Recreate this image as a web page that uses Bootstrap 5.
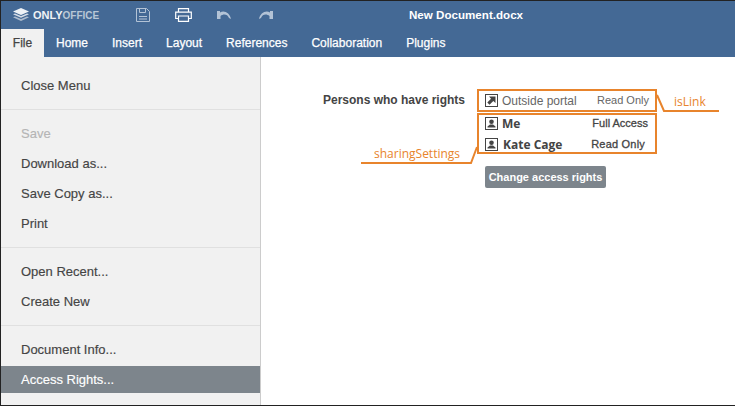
<!DOCTYPE html>
<html lang="en"><head><meta charset="utf-8"><title>New Document.docx</title>
<link rel="stylesheet" href="https://cdn.jsdelivr.net/npm/bootstrap@5.3.0/dist/css/bootstrap.min.css">
<style>
html,body{margin:0;height:406px;overflow:hidden;background:#fff}
body{font-family:"Liberation Sans",Arial,sans-serif;color:#444}
.frame{width:735px;height:406px;border:1px solid #222;border-right:0;position:relative;overflow:hidden}
.topbar{height:56px;background:#446995;color:#fff}
.titlerow{height:28px;position:relative}
.logo-box{width:106px;flex:none;padding-left:12px;gap:4px}
.logo-word{font-size:11px;font-weight:700;color:#f0f3f6;white-space:nowrap}
.logo-word span{font-size:10px;font-weight:700;color:#b9c7d6}
.tool-icons{margin-left:15px}
.tool{width:41px;display:flex;justify-content:center}
.doc-name{position:absolute;left:408px;top:7px;font-size:11.6px;font-weight:700;line-height:14px}
.tabrow{height:28px;font-size:12px;padding-left:43px;-webkit-text-stroke:.25px currentColor}
.tabitem{line-height:28px;color:#fff;white-space:nowrap;margin-left:24px}
.tabitem.on{position:absolute;left:0;width:43px;margin:0;text-align:center;background:#f1f1f1;color:#444}
.tabitem.lead-tab{margin-left:12px}
.bodyrow{height:348px}
.sidemenu{width:260px;flex:none;background:#f1f1f1;border-right:1px solid #ccc;padding-top:14px;height:348px;overflow:hidden;font-size:13px;-webkit-text-stroke:.15px currentColor}
.mitem{height:30px;line-height:29px;padding-left:20px;color:#444;white-space:nowrap}
.mitem.off{color:#b5b5b5}
.mitem.sel{background:#7d858c;color:#fff;height:27px;line-height:27px;margin-top:1px;margin-bottom:2px}
.msep{height:1px;background:#e0e0e0;margin:8px 0 9px}
.rightpane{flex:1;padding:32px 0 0 62px;position:relative}
.rights-label{width:155px;font-size:12px;font-weight:700;color:#444;line-height:22px;white-space:nowrap}
.rights-list{width:172px;font-size:12px}
.rrow{height:21px;display:flex;align-items:center;padding-left:7px;white-space:nowrap}
.rrow.first{height:23px;margin-bottom:1px;color:#666}
.pname{margin-left:4px;flex:1}
.pname.strong{font-weight:700;color:#444;font-family:"Open Sans",sans-serif}
.pname.me{margin-left:4px}
.pname.kate{margin-left:5px}
.pacc{font-size:11px;padding-right:1px}
.pacc.m{color:#444;padding-right:2px;-webkit-text-stroke:.3px #444}
.pacc.rd{padding-right:5px;-webkit-text-stroke:.3px #444;letter-spacing:.2px}
.change-btn{display:block;margin:11px 0 0 7px;width:121px;height:22px;padding:0;border:0;border-radius:2px;background:#7d858c;color:#fff;font-size:11px;font-weight:700;line-height:22px}
.anno-svg{position:absolute;left:-1px;top:-1px;pointer-events:none}
.anno-text{position:absolute;color:#e8842c;font-family:"Open Sans",sans-serif;font-size:12px;line-height:16px}
</style></head><body>
<div class="frame">
 <div class="topbar">
  <div class="titlerow d-flex align-items-center">
   <div class="logo-box d-flex align-items-center">
    <svg width="16" height="14" viewBox="1 0 16 14"><path d="M9 0l8 3.500-8 3.500-8-3.500z" fill="#eef2f6"/><path d="M1 6.200l2-.8 6 2.600 6-2.600 2 .8L9 9.700z" fill="#d5dde7"/><path d="M1 9.200l2-.8 6 2.600 6-2.600 2 .8L9 13z" fill="#aebccd"/></svg>
    <div class="logo-word">ONLY<span>OFFICE</span></div>
   </div>
   <div class="tool-icons d-flex align-items-center">
    <div class="tool"><svg width="14" height="14" viewBox="0 0 14 14" fill="none" stroke="#b3c3d6"><path d="M.5.5h10l3 3v10H.5z"/><path d="M3.500.5v4h6v-4"/><path d="M3 8.500h8M3 11h8"/></svg></div>
    <div class="tool"><svg width="17" height="14" viewBox="0 0 17 14" fill="none" stroke="#fff" stroke-width="1.2"><path d="M3.500 4V.7h10V4"/><path d="M3.500 10.500H.7V4.200h15.600v6.300h-2.800"/><path d="M3.500 8h10v5.400h-10z"/></svg></div>
    <div class="tool"><svg width="15" height="10" viewBox="0 0 15 10"><path d="M0 1v8h3.500V6c3-2.500 7-2 8.500 2l2 1C13 3 7-.5 3 2.500V1z" fill="#b3c3d6"/></svg></div>
    <div class="tool"><svg width="15" height="10" viewBox="0 0 15 10"><path d="M15 1v8h-3.500V6C8.500 3.500 4.500 4 3 8L1 9C2 3 8-.5 12 2.500V1z" fill="#b3c3d6"/></svg></div>
   </div>
   <div class="doc-name">New Document.docx</div>
  </div>
  <div class="tabrow d-flex position-relative">
   <div class="tabitem on">File</div>
   <div class="tabitem lead-tab">Home</div>
   <div class="tabitem">Insert</div>
   <div class="tabitem">Layout</div>
   <div class="tabitem">References</div>
   <div class="tabitem">Collaboration</div>
   <div class="tabitem">Plugins</div>
  </div>
 </div>
 <div class="bodyrow d-flex">
  <div class="sidemenu">
   <div class="mitem">Close Menu</div>
   <div class="msep"></div>
   <div class="mitem off">Save</div>
   <div class="mitem">Download as...</div>
   <div class="mitem">Save Copy as...</div>
   <div class="mitem">Print</div>
   <div class="msep"></div>
   <div class="mitem">Open Recent...</div>
   <div class="mitem">Create New</div>
   <div class="msep"></div>
   <div class="mitem">Document Info...</div>
   <div class="mitem sel">Access Rights...</div>
   <div class="mitem off">Version History</div>
  </div>
  <div class="rightpane d-flex">
   <div class="rights-label">Persons who have rights</div>
   <div>
    <div class="rights-list">
     <div class="rrow first">
      <svg width="13" height="13" viewBox="0 0 13 13"><rect x=".5" y=".5" width="12" height="12" fill="none" stroke="#444"/><path d="M4 2.500h6.500V9L8.300 7 4.500 10.800 2.300 8.600 6 4.700z" fill="#444"/></svg>
      <span class="pname">Outside portal</span><span class="pacc">Read Only</span>
     </div>
     <div class="rrow">
      <svg width="13" height="13" viewBox="0 0 13 13"><rect x=".5" y=".5" width="12" height="12" fill="none" stroke="#444"/><circle cx="6.500" cy="4.700" r="2.300" fill="#444"/><path d="M2.500 10.500h8V9.500L8 7.500H5L2.500 9.500z" fill="#444"/></svg>
      <span class="pname strong me">Me</span><span class="pacc m">Full Access</span>
     </div>
     <div class="rrow">
      <svg width="13" height="13" viewBox="0 0 13 13"><rect x=".5" y=".5" width="12" height="12" fill="none" stroke="#444"/><circle cx="6.500" cy="4.700" r="2.300" fill="#444"/><path d="M2.500 10.500h8V9.500L8 7.500H5L2.500 9.500z" fill="#444"/></svg>
      <span class="pname strong kate">Kate Cage</span><span class="pacc rd">Read Only</span>
     </div>
    </div>
    <button type="button" class="btn change-btn">Change access rights</button>
   </div>
  </div>
 </div>
 <svg class="anno-svg" width="735" height="406" fill="none" stroke="#e8842c" stroke-width="2">
  <rect x="478" y="90" width="178" height="21"/>
  <rect x="478" y="114" width="178" height="39"/>
  <path d="M657 95l7 16h55"/>
  <path d="M477 147l-6 16H361"/>
 </svg>
 <div class="anno-text" style="left:673px;top:93px">isLink</div>
 <div class="anno-text" style="left:373px;top:145px">sharingSettings</div>
</div>
</body></html>
